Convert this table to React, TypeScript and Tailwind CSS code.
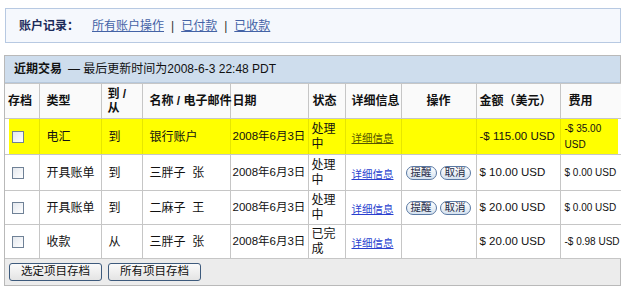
import React from "react";

const font = { fontFamily: '"Liberation Sans", "Noto Sans CJK SC", sans-serif' };

const Check = () => (
  <span className="inline-block w-[12px] h-[12px] border border-[#6f8196] bg-gradient-to-br from-[#e4e8ee] to-[#ffffff] align-middle" />
);

const Pill = ({ children }: { children: React.ReactNode }) => (
  <span className="inline-flex items-center justify-center whitespace-nowrap h-[14px] px-[4px] rounded-[7px] border border-[#5a79a3] bg-gradient-to-b from-[#ffffff] to-[#d6e2ef] text-[10.5px] leading-none text-[#1d2a44]">
    {children}
  </span>
);

const Link = ({ yellow }: { yellow?: boolean }) => (
  <a className={"underline text-[10.5px] " + (yellow ? "text-[#555500]" : "text-[#2a3fcf]")}>详细信息</a>
);

type Row = {
  type: string;
  dir: string;
  name: string;
  status: React.ReactNode;
  actions: boolean;
  amount: string;
  fee: React.ReactNode;
  yellow?: boolean;
  h: string;
};

const rows: Row[] = [
  { type: "电汇", dir: "到", name: "银行账户", status: <>处理<br />中</>, actions: false, amount: "-$ 115.00 USD", fee: <>-$ 35.00<br />USD</>, yellow: true, h: "h-[36px]" },
  { type: "开具账单", dir: "到", name: "三胖子  张", status: <>处理<br />中</>, actions: true, amount: "$ 10.00 USD", fee: "$ 0.00 USD", h: "h-[36px]" },
  { type: "开具账单", dir: "到", name: "二麻子  王", status: <>处理<br />中</>, actions: true, amount: "$ 20.00 USD", fee: "$ 0.00 USD", h: "h-[34px]" },
  { type: "收款", dir: "从", name: "三胖子  张", status: <>已完<br />成</>, actions: false, amount: "$ 20.00 USD", fee: "-$ 0.98 USD", h: "h-[34px]" },
];

export default function App() {
  const th = "border border-[#c6c6c6] font-bold align-middle text-[12px] leading-[14px] text-[#111]";
  return (
    <div className="w-[624px] h-[298px] bg-white text-[#111]" style={font}>
      <div className="pt-[8px] pl-[5px] pr-[3px]">
        <div className="h-[35px] border border-[#b7c9e2] bg-[#f5f8fd] flex items-center pl-[13px] text-[12px]">
          <span className="font-bold text-[#1c2b5a] mr-[13px]">账户记录：</span>
          <a className="underline text-[#4463a6]">所有账户操作</a>
          <span className="mx-[7px] text-[#333]">|</span>
          <a className="underline text-[#4463a6]">已付款</a>
          <span className="mx-[7px] text-[#333]">|</span>
          <a className="underline text-[#4463a6]">已收款</a>
        </div>
      </div>
      <div className="mt-[12px] ml-[4px] w-[617px] border border-[#b9b9b9]">
        <div className="h-[27px] bg-[#cedded] border-b border-[#b6c8dc] flex items-center pl-[9px] text-[12px]">
          <span className="font-bold mr-[6px]">近期交易</span>
          <span>— 最后更新时间为2008-6-3 22:48 PDT</span>
        </div>
        <table className="w-full border-collapse table-fixed">
          <colgroup>
            <col className="w-[34px]" />
            <col className="w-[62px]" />
            <col className="w-[41px]" />
            <col className="w-[88px]" />
            <col className="w-[78px]" />
            <col className="w-[37px]" />
            <col className="w-[56px]" />
            <col className="w-[75px]" />
            <col className="w-[84px]" />
            <col className="w-[61px]" />
          </colgroup>
          <thead>
            <tr className="h-[35px] bg-[#fafafa]">
              <th className={th + " text-left pl-[3px] border-l-0"}>存档</th>
              <th className={th + " text-left pl-[7px]"}>类型</th>
              <th className={th + " text-left pl-[6px]"}>到 /<br />从</th>
              <th className={th + " text-left pl-[7px] whitespace-nowrap"}>名称 / 电子邮件</th>
              <th className={th + " text-left pl-[2px]"}>日期</th>
              <th className={th + " text-left pl-[4px]"}>状态</th>
              <th className={th + " text-left pl-[6px]"}>详细信息</th>
              <th className={th + " text-center"}>操作</th>
              <th className={th + " text-left pl-[3px] whitespace-nowrap"}>金额（美元）</th>
              <th className={th + " text-left pl-[8px] border-r-0"}>费用</th>
            </tr>
          </thead>
          <tbody>
            {rows.map((r, i) => {
              const bd = r.yellow ? "border-y border-y-[#c6c6c6] border-x border-x-[#e6e600]" : "border border-[#c6c6c6]";
              const td = `${bd} align-middle ${r.yellow ? "bg-[#ffff00]" : "bg-white"}`;
              return (
                <tr key={i} className={r.h}>
                  <td className={td + " pl-[7px] border-l-0" + (r.yellow ? " shadow-[inset_4px_0_0_#ffffff]" : "")}>
                    <Check />
                  </td>
                  <td className={td + " pl-[7px] text-[12px]"}>{r.type}</td>
                  <td className={td + " pl-[7px] text-[12px]"}>{r.dir}</td>
                  <td className={td + " pl-[7px] whitespace-pre text-[12px]"}>{r.name}</td>
                  <td className={td + " pl-[2px] whitespace-nowrap text-[11.5px]"}>2008年6月3日</td>
                  <td className={td + " pl-[3px] text-[12px] leading-[15px]"}>{r.status}</td>
                  <td className={td + " pl-[6px]"}><Link yellow={r.yellow} /></td>
                  <td className={td + " pl-[4px]"}>
                    {r.actions && (
                      <div className="flex gap-[3px]">
                        <Pill>提醒</Pill>
                        <Pill>取消</Pill>
                      </div>
                    )}
                  </td>
                  <td className={td + " pl-[3px] whitespace-nowrap text-[11.5px]"}>{r.amount}</td>
                  <td className={td + " pl-[4px] border-r-0 whitespace-nowrap text-[10px] leading-[16px]" + (r.yellow ? " shadow-[inset_-3px_0_0_#ffffff]" : "")}>{r.fee}</td>
                </tr>
              );
            })}
          </tbody>
        </table>
        <div className="h-[26px] bg-[#ececec] flex items-center gap-[6px] pl-[4px]">
          <button className="w-[93px] h-[18px] rounded-[3px] border border-[#3d5a7c] bg-gradient-to-b from-[#fafafa] to-[#e4e4e4] text-[11.5px] leading-none text-[#111]">选定项目存档</button>
          <button className="w-[93px] h-[18px] rounded-[3px] border border-[#3d5a7c] bg-gradient-to-b from-[#fafafa] to-[#e4e4e4] text-[11.5px] leading-none text-[#111]">所有项目存档</button>
        </div>
      </div>
    </div>
  );
}
